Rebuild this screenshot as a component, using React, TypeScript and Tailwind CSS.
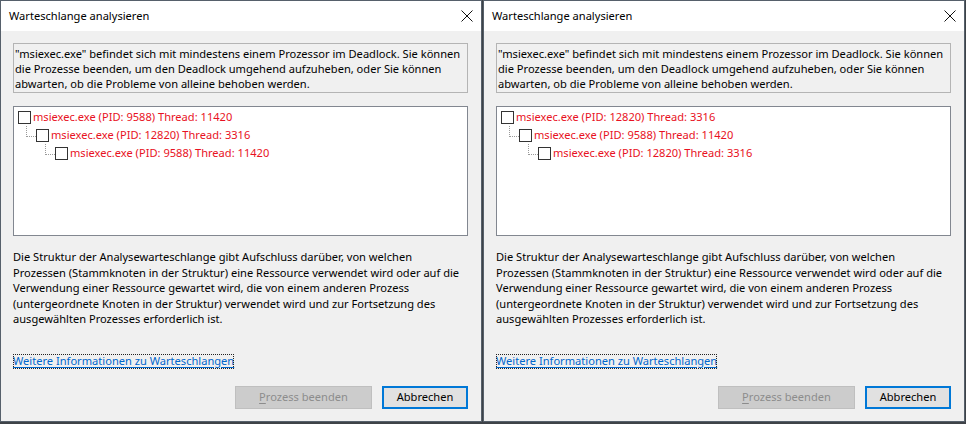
import React from "react";

type Row = { pid: number; thread: number; level: number };

const linksRows: Row[] = [
  { pid: 9588, thread: 11420, level: 0 },
  { pid: 12820, thread: 3316, level: 1 },
  { pid: 9588, thread: 11420, level: 2 },
];

const rechtsRows: Row[] = [
  { pid: 12820, thread: 3316, level: 0 },
  { pid: 9588, thread: 11420, level: 1 },
  { pid: 12820, thread: 3316, level: 2 },
];

const TreeRow = ({ row }: { row: Row }) => {
  return (
    <div className="flex items-center h-[18px]">
      {row.level === 0 ? (
        <span className="w-[4px] shrink-0" />
      ) : (
        <>
          <span className="shrink-0" style={{ width: 12 + 19 * (row.level - 1) }} />
          {/* gepunktete Verbindungslinie */}
          <span className="self-start w-[10px] h-[11px] shrink-0 border-l border-b border-dotted border-[#9a9a9a]" />
        </>
      )}
      <span className="w-[13px] h-[13px] shrink-0 border border-[#333333] bg-white" />
      <span className="ml-[2px] text-[#e81123] whitespace-nowrap">
        msiexec.exe (PID: {row.pid}) Thread: {row.thread}
      </span>
    </div>
  );
};

const Dialog = ({ rows }: { rows: Row[] }) => {
  return (
    <div className="w-[482px] h-[422px] shrink-0 border border-[#56606b] bg-[#f0f0f0] flex flex-col">
      <div className="h-[30px] bg-white flex items-center justify-between pl-[8px] pr-[8px]">
        <span className="text-black">Warteschlange analysieren</span>
        <svg width="12" height="12" viewBox="0 0 12 12">
          <path d="M0.5 0.5L11.5 11.5M11.5 0.5L0.5 11.5" stroke="#111" strokeWidth="1" fill="none" />
        </svg>
      </div>

      <div className="flex flex-col px-[12px]">
        <div className="mt-[12px] w-[455px] h-[50px] border border-[#b4b4b4] pl-[1px] pt-[2px] leading-[15px] text-black">
          <div className="whitespace-nowrap">"msiexec.exe" befindet sich mit mindestens einem Prozessor im Deadlock. Sie können</div>
          <div className="whitespace-nowrap">die Prozesse beenden, um den Deadlock umgehend aufzuheben, oder Sie können</div>
          <div className="whitespace-nowrap">abwarten, ob die Probleme von alleine behoben werden.</div>
        </div>

        <div className="mt-[13px] w-[455px] h-[130px] border border-[#828790] bg-white pt-[1px]">
          {rows.map((row, i) => (
            <TreeRow key={i} row={row} />
          ))}
        </div>

        <div className="mt-[13px] leading-[15.5px] text-black">
          <div className="whitespace-nowrap">Die Struktur der Analysewarteschlange gibt Aufschluss darüber, von welchen</div>
          <div className="whitespace-nowrap">Prozessen (Stammknoten in der Struktur) eine Ressource verwendet wird oder auf die</div>
          <div className="whitespace-nowrap">Verwendung einer Ressource gewartet wird, die von einem anderen Prozess</div>
          <div className="whitespace-nowrap">(untergeordnete Knoten in der Struktur) verwendet wird und zur Fortsetzung des</div>
          <div className="whitespace-nowrap">ausgewählten Prozesses erforderlich ist.</div>
        </div>

        <div className="mt-[27px] flex">
          <span className="h-[15px] leading-[14px] outline outline-dotted outline-1 outline-[#222] -outline-offset-1 text-[#0066cc] underline underline-offset-2 whitespace-nowrap">
            Weitere Informationen zu Warteschlangen
          </span>
        </div>

        <div className="mt-[17px] flex justify-end gap-[10px] pr-[1px]">
          <button className="w-[137px] h-[23px] bg-[#cccccc] border border-[#bfbfbf] text-[#8c8c8c]">
            <span className="underline underline-offset-2">P</span>rozess beenden
          </button>
          <button className="w-[86px] h-[23px] bg-[#e1e1e1] border-2 border-[#0078d7] text-black">
            Abbrechen
          </button>
        </div>
      </div>
    </div>
  );
};

export default function App() {
  return (
    <div className="w-[966px] h-[424px] overflow-hidden bg-[#3e4348] flex items-start gap-[1px] font-['Noto_Sans',sans-serif] text-[11.1px]">
      <Dialog rows={linksRows} />
      <Dialog rows={rechtsRows} />
    </div>
  );
}
